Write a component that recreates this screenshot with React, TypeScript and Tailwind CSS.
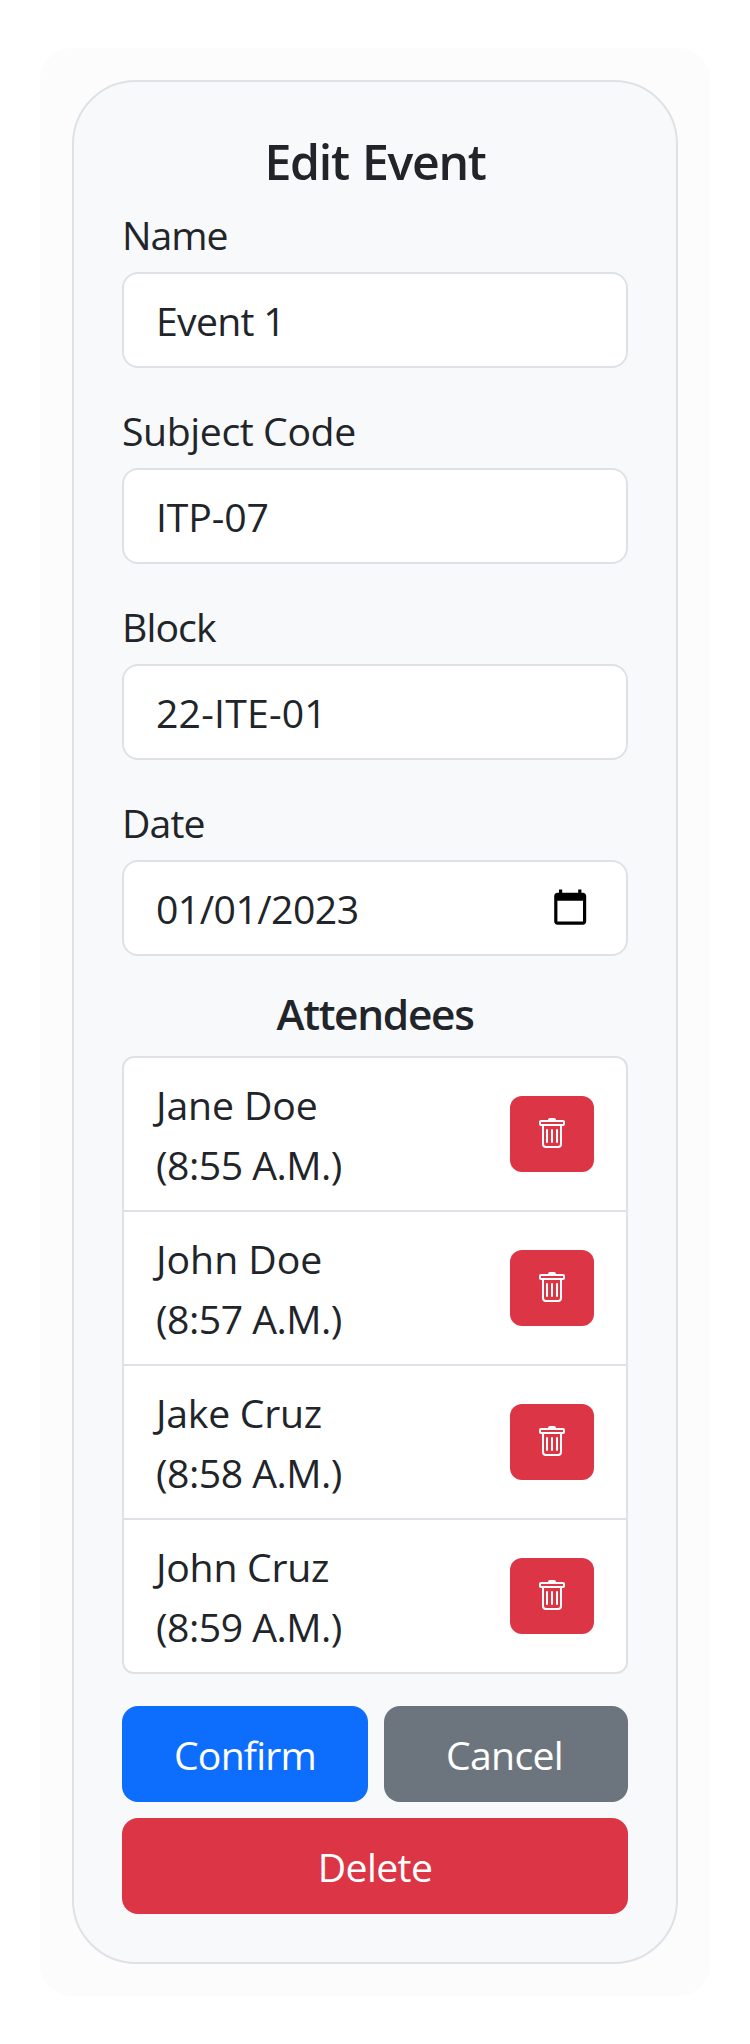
import React from "react";
import { BsTrash } from "react-icons/bs";

type FieldProps = {
  label: string;
  value: string;
  labelClass: string;
  valueClass: string;
  children?: React.ReactNode;
};

function Field({ label, value, labelClass, valueClass, children }: FieldProps) {
  return (
    <div className="mb-8">
      <div className={`mb-1 h-16 leading-[62px] ${labelClass}`}>{label}</div>
      <div className="flex h-24 items-center justify-between rounded-2xl border-2 border-[#dee2e6] bg-white px-8">
        <span className={`pt-0.5 leading-[60px] ${valueClass}`}>{value}</span>
        {children}
      </div>
    </div>
  );
}

function CalendarIcon() {
  return (
    <svg viewBox="0 0 24 24" className="-mt-0.5 mr-[5px] size-[38.4px]" fill="#000">
      <path d="M20 3h-1V1h-2v2H7V1H5v2H4c-1.1 0-2 .9-2 2v16c0 1.1.9 2 2 2h16c1.1 0 2-.9 2-2V5c0-1.1-.9-2-2-2zm0 18H4V8h16v13z" />
    </svg>
  );
}

const attendees = [
  { name: "Jane Doe", time: "(8:55 A.M.)", nameClass: "tracking-[-0.1px]" },
  { name: "John Doe", time: "(8:57 A.M.)", nameClass: "tracking-normal" },
  { name: "Jake Cruz", time: "(8:58 A.M.)", nameClass: "tracking-[-0.25px]" },
  { name: "John Cruz", time: "(8:59 A.M.)", nameClass: "tracking-[-0.25px]" },
];

export default function App() {
  return (
    <div className="min-h-[2044px] bg-white px-10 py-12 font-['Open_Sans','Liberation_Sans',sans-serif] text-[39.2px] text-[#212529]">
      <div className="rounded-[32px] bg-[#fcfcfc] p-8">
        <div className="rounded-[64px] border-2 border-[#dee2e6] bg-[#f8f9fa] p-12">
          <h2 className="mb-4 h-[58px] pt-0.5 text-center text-[48.2px] leading-[58px] font-semibold tracking-[-1.3px] [word-spacing:2px]">
            Edit Event
          </h2>

          <Field label="Name" value="Event 1" labelClass="tracking-[-1px]" valueClass="tracking-[-0.7px]" />
          <Field label="Subject Code" value="ITP-07" labelClass="tracking-[-0.4px]" valueClass="tracking-[-0.1px]" />
          <Field label="Block" value="22-ITE-01" labelClass="tracking-[-0.9px]" valueClass="tracking-[0.2px]" />
          <Field label="Date" value="01/01/2023" labelClass="tracking-[-0.9px]" valueClass="tracking-[-0.55px]">
            <CalendarIcon />
          </Field>

          <h4 className="mb-4 h-[52px] text-center text-[42.4px] leading-[52px] font-semibold tracking-[-1.3px]">
            Attendees
          </h4>

          <ul className="mb-8 divide-y-2 divide-[#dee2e6] overflow-hidden rounded-xl border-2 border-[#dee2e6] bg-white">
            {attendees.map((a) => (
              <li key={a.name} className="box-content flex h-[152px] items-center justify-between px-8">
                <div className="pt-0.5 leading-[60px]">
                  <div className={a.nameClass}>{a.name}</div>
                  <div className="tracking-[-0.5px]">{a.time}</div>
                </div>
                <button
                  type="button"
                  className="flex h-[76px] w-[84px] items-center justify-center rounded-xl bg-[#dc3545] text-white"
                >
                  <BsTrash className="size-8" />
                </button>
              </li>
            ))}
          </ul>

          <div className="mb-4 flex gap-4 text-white">
            <button type="button" className="h-24 w-[246px] rounded-2xl bg-[#0d6efd] pt-0.5 tracking-[-0.8px]">
              Confirm
            </button>
            <button type="button" className="h-24 flex-1 rounded-2xl bg-[#6c757d] pt-0.5 pr-[3px] tracking-[-0.7px]">
              Cancel
            </button>
          </div>
          <button
            type="button"
            className="block h-24 w-full rounded-2xl bg-[#dc3545] pt-0.5 tracking-[-0.6px] text-white"
          >
            Delete
          </button>
        </div>
      </div>
    </div>
  );
}
